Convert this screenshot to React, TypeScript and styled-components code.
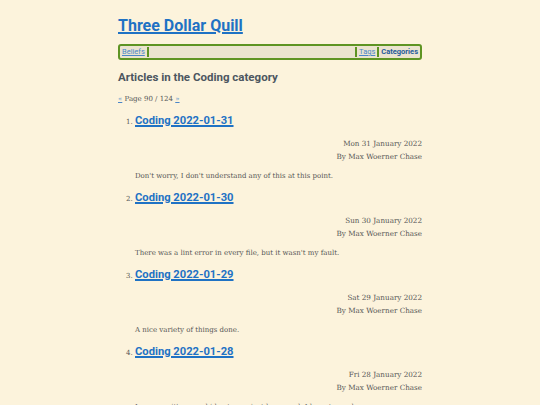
import React from "react";
import styled, { createGlobalStyle } from "styled-components";

const Global = createGlobalStyle`
  html, body { margin: 0; padding: 0; background: #fcf3dc; }
  body { font-family: "DejaVu Serif", serif; color: #555; }
`;

const sans = `Roboto, "Open Sans", sans-serif`;

const Page = styled.div`
  width: 304px;
  margin: 0 auto;
  padding-top: 15px;
`;

const SiteTitle = styled.h1`
  margin: 0;
  font-family: ${sans};
  font-size: 16px;
  font-weight: 700;
  line-height: 22px;
  a { color: #1f72c4; text-decoration: underline; text-decoration-thickness: 1.5px; }
`;

const Nav = styled.nav`
  margin-top: 7px;
  display: flex;
  align-items: stretch;
  border: 2px solid #5e9423;
  border-radius: 3px;
  background: #ebe4cf;
  padding: 1px 0;
  height: 10px;
  font-family: ${sans};
  font-size: 7.5px;
  line-height: 10px;
`;

const NavItem = styled.a<{ $current?: boolean; $last?: boolean }>`
  padding: 0 2px;
  color: ${p => (p.$current ? "#1f5a9a" : "#4a86c8")};
  font-weight: ${p => (p.$current ? 700 : 400)};
  text-decoration: ${p => (p.$current ? "none" : "underline")};
  border-right: ${p => (p.$last ? "none" : "2px solid #5e9423")};
`;

const NavSpacer = styled.div`
  flex: 1;
  border-right: 2px solid #5e9423;
`;

const Heading = styled.h2`
  margin: 9px 0 0;
  font-family: ${sans};
  font-size: 11.5px;
  font-weight: 700;
  color: #4c5660;
  line-height: 16px;
`;

const Pager = styled.p`
  margin: 9px 0 0;
  font-size: 7px;
  line-height: 10px;
  color: #555;
  a { color: #4a86c8; }
`;

const List = styled.ol`
  margin: 9px 0 0;
  padding-left: 17px;
`;

const Item = styled.li`
  font-size: 7px;
  color: #555;
  height: 77px;
`;

const ItemTitle = styled.h3`
  display: inline;
  font-family: ${sans};
  font-size: 11.2px;
  font-weight: 700;
  line-height: 16px;
  a { color: #1f72c4; text-decoration: underline; text-decoration-thickness: 1.5px; }
`;

const Meta = styled.div`
  margin-top: 8px;
  text-align: right;
  font-size: 7.2px;
  line-height: 13px;
  color: #555;
`;

const Summary = styled.p`
  margin: 7px 0 0;
  font-size: 7px;
  line-height: 12px;
  color: #555;
`;

const posts = [
  { t: "Coding 2022-01-31", d: "Mon 31 January 2022", s: "Don't worry, I don't understand any of this at this point." },
  { t: "Coding 2022-01-30", d: "Sun 30 January 2022", s: "There was a lint error in every file, but it wasn't my fault." },
  { t: "Coding 2022-01-29", d: "Sat 29 January 2022", s: "A nice variety of things done." },
  { t: "Coding 2022-01-28", d: "Fri 28 January 2022", s: "I suppose it's a good idea to see just how much I have to work on." },
];

export default function App() {
  return (
    <>
      <Global />
      <Page>
        <SiteTitle><a href="#">Three Dollar Quill</a></SiteTitle>
        <Nav>
          <NavItem href="#">Beliefs</NavItem>
          <NavSpacer />
          <NavItem href="#">Tags</NavItem>
          <NavItem href="#" $current $last>Categories</NavItem>
        </Nav>
        <Heading>Articles in the Coding category</Heading>
        <Pager><a href="#">«</a> Page 90 / 124 <a href="#">»</a></Pager>
        <List>
          {posts.map(p => (
            <Item key={p.t}>
              <ItemTitle><a href="#">{p.t}</a></ItemTitle>
              <Meta>{p.d}<br />By Max Woerner Chase</Meta>
              <Summary>{p.s}</Summary>
            </Item>
          ))}
        </List>
      </Page>
    </>
  );
}
